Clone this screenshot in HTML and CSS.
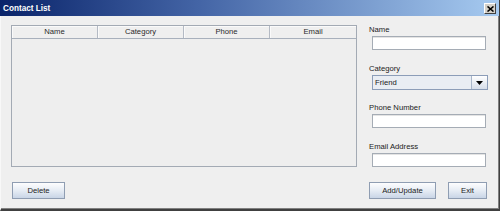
FILE: index.html
```html
<!DOCTYPE html>
<html>
<head>
<meta charset="utf-8">
<link rel="stylesheet" href="styles.css">
</head>
<body>
<div class="window">
  <div class="titlebar">
    <span class="title">Contact List</span>
    <span class="close">
      <svg width="7" height="6" viewBox="0 0 7 6"><path d="M0.5 0.5 L6.5 5.5 M6.5 0.5 L0.5 5.5" stroke="#000" stroke-width="1.6"/></svg>
    </span>
  </div>
  <div class="content">
    <div class="table">
      <div class="thead">
        <div class="th">Name</div>
        <div class="th">Category</div>
        <div class="th">Phone</div>
        <div class="th last">Email</div>
      </div>
      <div class="tbody"></div>
    </div>
    <div class="form">
      <div class="label">Name</div>
      <div class="input"></div>
      <div class="label gap">Category</div>
      <div class="combo">
        <span class="combo-text">Friend</span>
        <span class="combo-btn"><svg width="7" height="4" viewBox="0 0 7 4"><path d="M0 0 H7 L3.5 4 Z" fill="#000"/></svg></span>
      </div>
      <div class="label gap2">Phone Number</div>
      <div class="input"></div>
      <div class="label gap">Email Address</div>
      <div class="input"></div>
    </div>
    <div class="left-actions">
      <div class="btn btn-delete">Delete</div>
    </div>
    <div class="right-actions">
      <div class="btn btn-add">Add/Update</div>
      <div class="btn btn-exit">Exit</div>
    </div>
  </div>
</div>
</body>
</html>
```

FILE: styles.css
```css
html, body {
  margin: 0;
  padding: 0;
  background: #efefef;
}

.window {
  width: 500px;
  height: 211px;
  box-sizing: border-box;
  background: #efefef;
  border-left: 1px solid #f8f8f8;
  border-right: 1px solid #404040;
  border-bottom: 2px solid #404040;
  box-shadow: inset -1px -1px 0 #808080;
  font-family: "Liberation Sans", Arial, sans-serif;
  color: #222;
}

.titlebar {
  height: 16px;
  margin-left: -1px;
  background: linear-gradient(to right, #0a246a 0%, #4465a6 40%, #a6caf0 100%);
  display: flex;
  align-items: center;
  justify-content: space-between;
  padding: 0 3px 0 3px;
}

.title {
  color: #fff;
  font-weight: bold;
  font-size: 8.2px;
}

.close {
  width: 12px;
  height: 11px;
  box-sizing: border-box;
  background: #d4d0c8;
  border-top: 1px solid #fff;
  border-left: 1px solid #fff;
  border-right: 1px solid #404040;
  border-bottom: 1px solid #404040;
  display: flex;
  align-items: center;
  justify-content: center;
  margin-top: 1px;
}

.content {
  display: grid;
  grid-template-columns: 346px 119px;
  grid-template-rows: 142px auto;
  column-gap: 12px;
  row-gap: 15px;
  padding: 9px 0 0 10px;
}

.table {
  border: 1px solid #a3aab4;
  display: flex;
  flex-direction: column;
  background: #eeeeee;
}

.thead {
  display: grid;
  grid-template-columns: 86px 86px 86px 86px;
  height: 12px;
  border-bottom: 1px solid #a8b0bc;
}

.th {
  font-size: 7.7px;
  line-height: 12px;
  text-align: center;
  color: #2a2a2a;
  background: #efefef;
  border-right: 1px solid #b4bac4;
  box-shadow: inset 1px 1px 0 #fafafa;
}

.th.last {
  border-right: none;
}

.tbody {
  flex: 1;
}

.form {
  display: flex;
  flex-direction: column;
}

.label {
  font-size: 7.7px;
  line-height: 9px;
  height: 9px;
  color: #222;
}

.label.gap {
  margin-top: 14px;
}

.label.gap2 {
  margin-top: 13px;
}

.input {
  margin-top: 2px;
  margin-left: 3px;
  width: 114px;
  height: 14px;
  box-sizing: border-box;
  background: #fff;
  border: 1px solid #a5acb5;
  box-shadow: inset 0 1px 0 #e4e4e4;
}

.combo {
  margin-top: 2px;
  margin-left: 3px;
  width: 116px;
  height: 15px;
  box-sizing: border-box;
  border: 1px solid #8c9db8;
  background: #e9edf3;
  display: flex;
  align-items: stretch;
}

.combo-text {
  flex: 1;
  font-size: 7.7px;
  line-height: 13px;
  padding-left: 2px;
  color: #1a1a1a;
}

.combo-btn {
  width: 15px;
  border-left: 1px solid #a9b6c9;
  background: linear-gradient(#ffffff, #d6dde8);
  display: flex;
  align-items: center;
  justify-content: center;
}

.left-actions {
  padding-left: 1px;
}

.right-actions {
  display: flex;
  gap: 12px;
}

.btn {
  height: 17px;
  box-sizing: border-box;
  border: 1px solid #8f9db2;
  background: linear-gradient(#fdfdfe, #e6ecf4 50%, #c9d5e6);
  font-size: 7.7px;
  line-height: 15px;
  text-align: center;
  color: #1a1a1a;
}

.btn-delete {
  width: 53px;
}

.btn-add {
  width: 67px;
}

.btn-exit {
  width: 39px;
}
```
